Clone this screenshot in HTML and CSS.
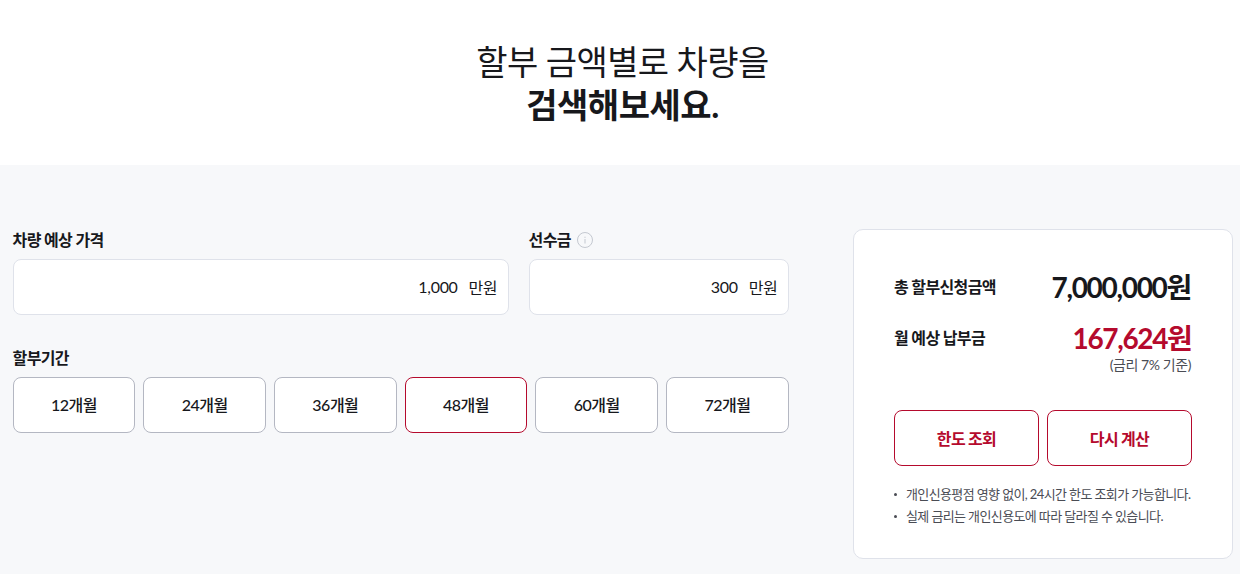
FILE: index.html
```html
<!DOCTYPE html>
<html lang="ko">
<head>
<meta charset="utf-8">
<title>할부 금액별 차량 검색</title>
<link rel="stylesheet" href="styles.css">
</head>
<body>
<header class="hero">
  <h1 class="hero-title">할부 금액별로 차량을<br><strong>검색해보세요.</strong></h1>
</header>
<main class="panel">
  <section class="form">
    <div class="fields">
      <div class="field field-price">
        <div class="label">차량 예상 가격</div>
        <div class="input"><span class="value">1,000</span><span class="unit">만원</span></div>
      </div>
      <div class="field field-down">
        <div class="label">선수금
          <svg class="info" width="16" height="16" viewBox="0 0 16 16" aria-hidden="true"><circle cx="8" cy="8" r="7.5" fill="none" stroke="#c4c8d0"/><rect x="7.5" y="7" width="1" height="4.5" fill="#c4c8d0"/><rect x="7.5" y="4.7" width="1" height="1.2" fill="#c4c8d0"/></svg>
        </div>
        <div class="input"><span class="value">300</span><span class="unit">만원</span></div>
      </div>
    </div>
    <div class="label term-label">할부기간</div>
    <div class="terms">
      <button class="term">12개월</button>
      <button class="term">24개월</button>
      <button class="term">36개월</button>
      <button class="term term-on">48개월</button>
      <button class="term">60개월</button>
      <button class="term">72개월</button>
    </div>
  </section>
  <aside class="card">
    <div class="row row-total"><span class="row-name">총 할부신청금액</span><span class="amount">7,000,000원</span></div>
    <div class="row row-month"><span class="row-name">월 예상 납부금</span><span class="amount amount-red">167,624원</span></div>
    <div class="rate">(금리 7% 기준)</div>
    <div class="actions">
      <button class="action">한도 조회</button>
      <button class="action">다시 계산</button>
    </div>
    <ul class="notes">
      <li>개인신용평점 영향 없이, 24시간 한도 조회가 가능합니다.</li>
      <li>실제 금리는 개인신용도에 따라 달라질 수 있습니다.</li>
    </ul>
  </aside>
</main>
</body>
</html>
```
FILE: styles.css
```css
* { box-sizing: border-box; }
html, body { margin: 0; padding: 0; }
body {
  width: 1240px;
  height: 574px;
  overflow: hidden;
  background: #f7f8fa;
  color: #17181c;
  font-family: Lato, "Noto Sans CJK KR", sans-serif;
}
.hero {
  height: 165px;
  background: #fff;
  padding: 40px 0 0 5px;
  text-align: center;
}
.hero-title {
  margin: 0;
  font-size: 34px;
  line-height: 43px;
  font-weight: 400;
  letter-spacing: -0.6px;
}
.hero-title strong { font-weight: 700; letter-spacing: -0.45px; }
.panel {
  display: flex;
  align-items: flex-start;
  justify-content: space-between;
  padding: 64px 7px 0 12.6px;
}
.form { width: 776.2px; }
.fields { display: flex; gap: 20px; }
.field-price { width: 496px; }
.field-down { width: 260.2px; }
.label {
  display: flex;
  align-items: center;
  gap: 6px;
  height: 20px;
  margin: 1px 0 9px;
  font-size: 16px;
  font-weight: 700;
  letter-spacing: -0.64px;
  line-height: 20px;
}
.input {
  display: flex;
  justify-content: flex-end;
  align-items: center;
  gap: 11px;
  height: 56px;
  padding: 0 10.5px 1px;
  background: #fff;
  border: 1px solid #dfe2ea;
  border-radius: 8px;
  font-size: 16px;
  letter-spacing: -0.48px;
}
.value { letter-spacing: -0.3px; }
.term-label { margin-top: 33px; margin-bottom: 9px; }
.terms {
  display: grid;
  grid-template-columns: repeat(6, 1fr);
  gap: 8px;
}
.term {
  height: 56px;
  padding: 0 0 2px;
  background: #fff;
  border: 1px solid #b4b7c2;
  border-radius: 8px;
  font: 500 16px Lato, "Noto Sans CJK KR", sans-serif;
  letter-spacing: -0.5px;
  color: #17181c;
}
.term-on { border-color: #b50a2d; }
.card {
  width: 380px;
  height: 330px;
  padding: 38px 40px 0;
  background: #fff;
  border: 1px solid #dfe2ea;
  border-radius: 10px;
}
.row {
  display: flex;
  justify-content: space-between;
  align-items: center;
  height: 36px;
}
.row-month { margin-top: 15px; }
.row-name {
  font-size: 16px;
  font-weight: 700;
  letter-spacing: -0.64px;
}
.amount {
  padding-right: 1px;
  font-size: 28px;
  font-weight: 700;
  letter-spacing: -1.3px;
}
.amount-red { color: #b50a2d; padding-right: 0.5px; letter-spacing: -1.35px; }
.rate {
  margin-top: 1px;
  padding-right: 1px;
  text-align: right;
  font-size: 14px;
  line-height: 18px;
  color: #4a4c54;
  letter-spacing: -0.42px;
}
.actions {
  display: flex;
  gap: 8px;
  margin-top: 36px;
}
.action {
  flex: 1;
  height: 56px;
  padding: 0;
  background: #fff;
  border: 1px solid #b50a2d;
  border-radius: 8px;
  color: #b50a2d;
  font: 700 16px Lato, "Noto Sans CJK KR", sans-serif;
  letter-spacing: -0.7px;
}
.notes {
  margin: 17px 0 0;
  padding: 0;
  list-style: none;
  font-size: 13px;
  line-height: 22px;
  color: #4a4c54;
  letter-spacing: -0.62px;
}
.notes li { padding-left: 12px; position: relative; white-space: nowrap; }
.notes li::before {
  content: "";
  position: absolute;
  left: 0;
  top: 10px;
  width: 3px;
  height: 3px;
  border-radius: 50%;
  background: #4a4c54;
}
```
